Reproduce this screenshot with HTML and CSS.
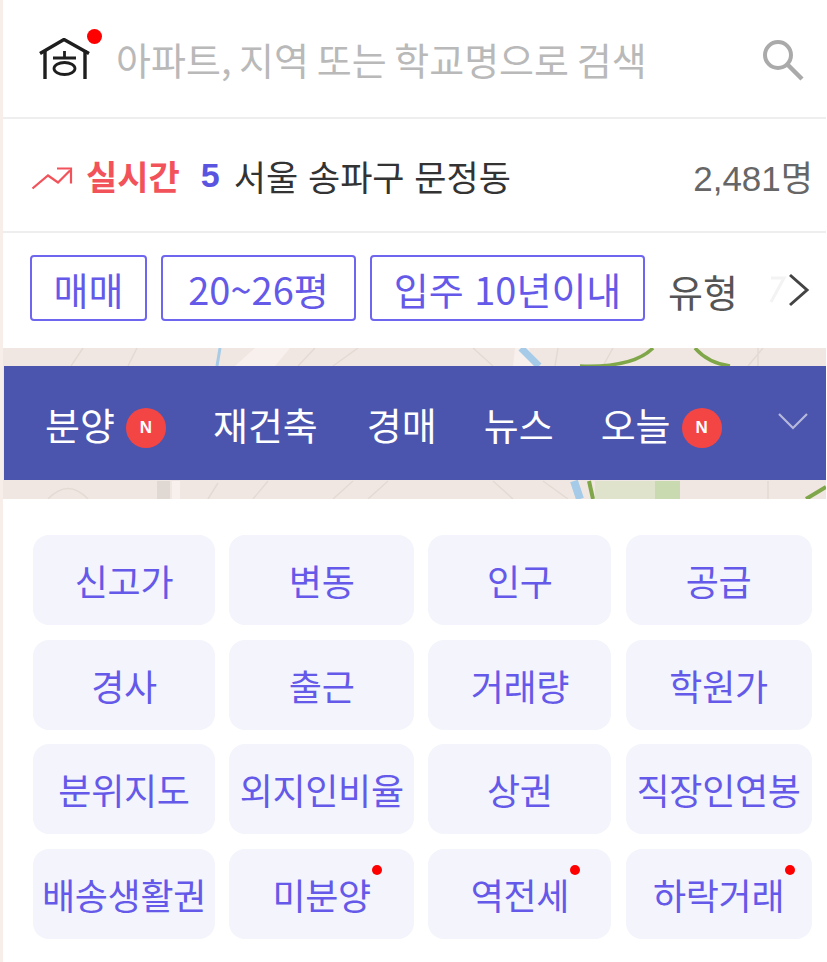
FILE: index.html
```html
<!DOCTYPE html>
<html lang="ko">
<head>
    <meta charset="UTF-8">
    <meta name="viewport" content="width=device-width, initial-scale=1.0">
    <title>아파트 검색</title>
    <link rel="stylesheet" href="styles.css">
</head>
<body>
    <div class="container">
        <header class="search-bar">
            <div class="logo">
                <svg width="52" height="42" viewBox="0 0 52 42" fill="none" stroke="#1e1e1e" stroke-width="3.400">
                    <path d="M1 15.500 L25 1.500 L50 15.500" stroke-linejoin="round"/>
                    <path d="M6 12 V41 M46 12 V41"/>
                    <path d="M25.500 13 V20 M14 20 H37" stroke-width="2.800"/>
                    <ellipse cx="25.500" cy="30.500" rx="10.500" ry="6" stroke-width="2.800"/>
                </svg>
                <span class="logo-dot"></span>
            </div>
            <div class="search-text">아파트, 지역 또는 학교명으로 검색</div>
            <svg class="search-icon" width="42" height="42" viewBox="0 0 42 42" fill="none" stroke="#aaaaaa">
                <circle cx="16" cy="15" r="13" stroke-width="4"/>
                <path d="M26 25 L40 39" stroke-width="4.500"/>
            </svg>
        </header>

        <section class="live-row">
            <svg class="live-icon" width="42" height="26" viewBox="0 0 42 26" fill="none" stroke="#f2535a" stroke-width="2.200">
                <path d="M0.500 23.500 L16 10.500 L26 17.500 L38 5.500"/>
                <path d="M25 3.500 H39 V18.500"/>
            </svg>
            <strong class="live-label">실시간</strong>
            <strong class="live-rank">5</strong>
            <span class="live-place">서울 송파구 문정동</span>
            <span class="live-count">2,481명</span>
        </section>

        <section class="filter-row">
            <button class="chip chip-sale">매매</button>
            <button class="chip chip-size">20~26평</button>
            <button class="chip chip-age">입주 10년이내</button>
            <span class="filter-plain">유형</span>
            <svg class="filter-next" width="44" height="36" viewBox="0 0 44 36" fill="none" stroke="#444" stroke-width="3">
                <path d="M4 6 H17 L4 30" stroke="#f3f3f3"/>
                <path d="M23 3 L40 18 L23 33"/>
            </svg>
        </section>

        <section class="map-band">
            <svg class="map-bg" viewBox="0 0 823 151" preserveAspectRatio="none" fill="none">
                <rect width="823" height="151" fill="#f1e7e2"/>
                <g stroke="#e4dad4" stroke-width="1.500">
                    <path d="M80 0 L68 18 M134 0 L125 18 M312 0 L295 18 M355 0 L330 18"/>
                    <path d="M470 0 L490 18 M555 0 L552 18 M610 0 L600 18 M760 0 L745 18 M755 0 L755 18"/>
                    <path d="M45 151 Q65 130 85 151 M215 135 L205 151 M265 133 L250 151 M350 133 L330 151 M385 133 L365 151"/>
                    <path d="M490 133 L510 151 M540 133 L565 151 M765 133 L765 151"/>
                </g>
                <path d="M252 0 L232 18 L272 18 L287 0 Z" fill="#f8f0ed"/>
                <path d="M512 0 L510 18 L530 18 L526 0 Z" fill="#f8f0ed"/>
                <path d="M217 0 L214 18" stroke="#a8cbe6" stroke-width="3"/>
                <path d="M518 0 L536 18" stroke="#a5cbe8" stroke-width="7"/>
                <path d="M577 18 Q630 20 650 0 M692 0 Q705 15 727 18" stroke="#7fa648" stroke-width="3.500"/>
                <rect x="154" y="133" width="13" height="18" fill="#e0d8d2"/>
                <rect x="169" y="133" width="8" height="18" fill="#f8f0ed"/>
                <rect x="592" y="133" width="85" height="18" fill="#dfe3cc"/>
                <rect x="652" y="133" width="25" height="18" fill="#cadab0"/>
                <path d="M571 133 L577 151" stroke="#a5cbe8" stroke-width="8"/>
                <path d="M586 133 L590 151" stroke="#7fa648" stroke-width="4"/>
                <path d="M803 151 L823 139" stroke="#7fa648" stroke-width="4"/>
            </svg>
            <nav class="nav-bar">
                <a class="nav-item nav-bunyang">분양<span class="badge-n">N</span></a>
                <a class="nav-item nav-rebuild">재건축</a>
                <a class="nav-item nav-auction">경매</a>
                <a class="nav-item nav-news">뉴스</a>
                <a class="nav-item nav-today">오늘<span class="badge-n">N</span></a>
                <svg class="nav-more" width="32" height="18" viewBox="0 0 32 18" fill="none" stroke="#b6b9dc" stroke-width="2.200">
                    <path d="M2 2 L16 16 L30 2"/>
                </svg>
            </nav>
        </section>

        <section class="menu-grid">
            <a class="tile">신고가</a>
            <a class="tile">변동</a>
            <a class="tile">인구</a>
            <a class="tile">공급</a>
            <a class="tile">경사</a>
            <a class="tile">출근</a>
            <a class="tile">거래량</a>
            <a class="tile">학원가</a>
            <a class="tile">분위지도</a>
            <a class="tile">외지인비율</a>
            <a class="tile">상권</a>
            <a class="tile">직장인연봉</a>
            <a class="tile">배송생활권</a>
            <a class="tile"><span class="has-dot">미분양</span></a>
            <a class="tile"><span class="has-dot">역전세</span></a>
            <a class="tile"><span class="has-dot">하락거래</span></a>
        </section>
    </div>
</body>
</html>
```
FILE: styles.css
```css
body {
    margin: 0;
    background-color: #fff;
    color: #333;
    font-family: "Noto Sans CJK KR", "Liberation Sans", sans-serif;
    overflow: hidden;
}
.container {
    width: 823px;
    height: 962px;
    border-left: 3px solid #f7eeea;
    background-color: #fff;
}
.search-bar {
    display: flex;
    align-items: center;
    height: 117px;
    padding-left: 36px;
    border-bottom: 2px solid #eeeeee;
}
.logo {
    position: relative;
    width: 52px;
    height: 42px;
    margin-top: 1px;
}
.logo svg {
    display: block;
}
.logo-dot {
    position: absolute;
    top: -9px;
    right: -11px;
    width: 15px;
    height: 15px;
    border-radius: 50%;
    background-color: #ff0000;
}
.search-text {
    margin-left: 25px;
    font-size: 38px;
    word-spacing: -3px;
    color: #b9b9b9;
    white-space: nowrap;
}
.search-icon {
    margin-left: auto;
    margin-right: 22px;
    margin-top: 4px;
}
.live-row {
    display: flex;
    align-items: center;
    height: 112px;
    padding-left: 29px;
    padding-right: 13px;
    border-bottom: 2px solid #eeeeee;
    font-size: 34px;
}
.live-icon {
    margin-top: 5px;
}
.live-label {
    margin-left: 12px;
    color: #f2535a;
    font-weight: 700;
}
.live-rank {
    margin-left: 21px;
    color: #5a55e0;
    font-family: "Liberation Sans", sans-serif;
    font-weight: 700;
}
.live-place {
    margin-left: 14px;
    font-size: 35px;
    color: #333;
}
.live-count {
    margin-left: auto;
    font-family: "Liberation Sans", "Noto Sans CJK KR", sans-serif;
    font-size: 35px;
    color: #666;
}
.filter-row {
    display: flex;
    align-items: center;
    height: 115px;
    padding-left: 27px;
    padding-bottom: 5px;
    box-sizing: border-box;
}
.chip {
    height: 66px;
    padding: 0;
    border: 2px solid #6f66f0;
    border-radius: 4px;
    background-color: #fff;
    color: #6459e8;
    font-family: inherit;
    font-size: 38px;
    white-space: nowrap;
    box-sizing: border-box;
}
.chip-sale {
    width: 117px;
}
.chip-size {
    width: 195px;
    margin-left: 14px;
}
.chip-age {
    width: 275px;
    margin-left: 14px;
}
.filter-plain {
    margin-left: 23px;
    margin-top: 4px;
    font-size: 38px;
    color: #555;
}
.filter-next {
    margin-left: 29px;
    margin-top: 4px;
}
.map-band {
    position: relative;
    height: 151px;
    padding: 18px 0 19px 1px;
    box-sizing: border-box;
}
.map-bg {
    position: absolute;
    top: 0;
    left: 0;
    width: 100%;
    height: 100%;
}
.nav-bar {
    position: relative;
    display: flex;
    align-items: center;
    height: 114px;
    background-color: #4b55ae;
    color: #fff;
    font-size: 38px;
}
.nav-item {
    display: flex;
    align-items: center;
    white-space: nowrap;
}
.nav-bunyang {
    margin-left: 41px;
}
.nav-rebuild {
    margin-left: 47px;
}
.nav-auction {
    margin-left: 49px;
}
.nav-news {
    margin-left: 47px;
}
.nav-today {
    margin-left: 47px;
}
.badge-n {
    display: flex;
    align-items: center;
    justify-content: center;
    width: 40px;
    height: 40px;
    margin-left: 11px;
    margin-top: 10px;
    border-radius: 50%;
    background-color: #f44545;
    font-family: "Liberation Sans", sans-serif;
    font-size: 17px;
    font-weight: 700;
}
.nav-more {
    margin-left: auto;
    margin-right: 17px;
    margin-top: -5px;
}
.menu-grid {
    display: grid;
    grid-template-columns: 182px 185px 183px 186px;
    grid-auto-rows: 90px;
    gap: 14.500px 14.200px;
    padding: 36px 0 0 30px;
}
.tile {
    display: flex;
    align-items: center;
    justify-content: center;
    border-radius: 16px;
    background-color: #f3f4fc;
    color: #6459e8;
    font-size: 36px;
    letter-spacing: -0.300px;
    white-space: nowrap;
}
.has-dot {
    position: relative;
}
.has-dot::after {
    content: "";
    position: absolute;
    top: -3px;
    right: -11px;
    width: 10px;
    height: 10px;
    border-radius: 50%;
    background-color: #ff0000;
}
```
